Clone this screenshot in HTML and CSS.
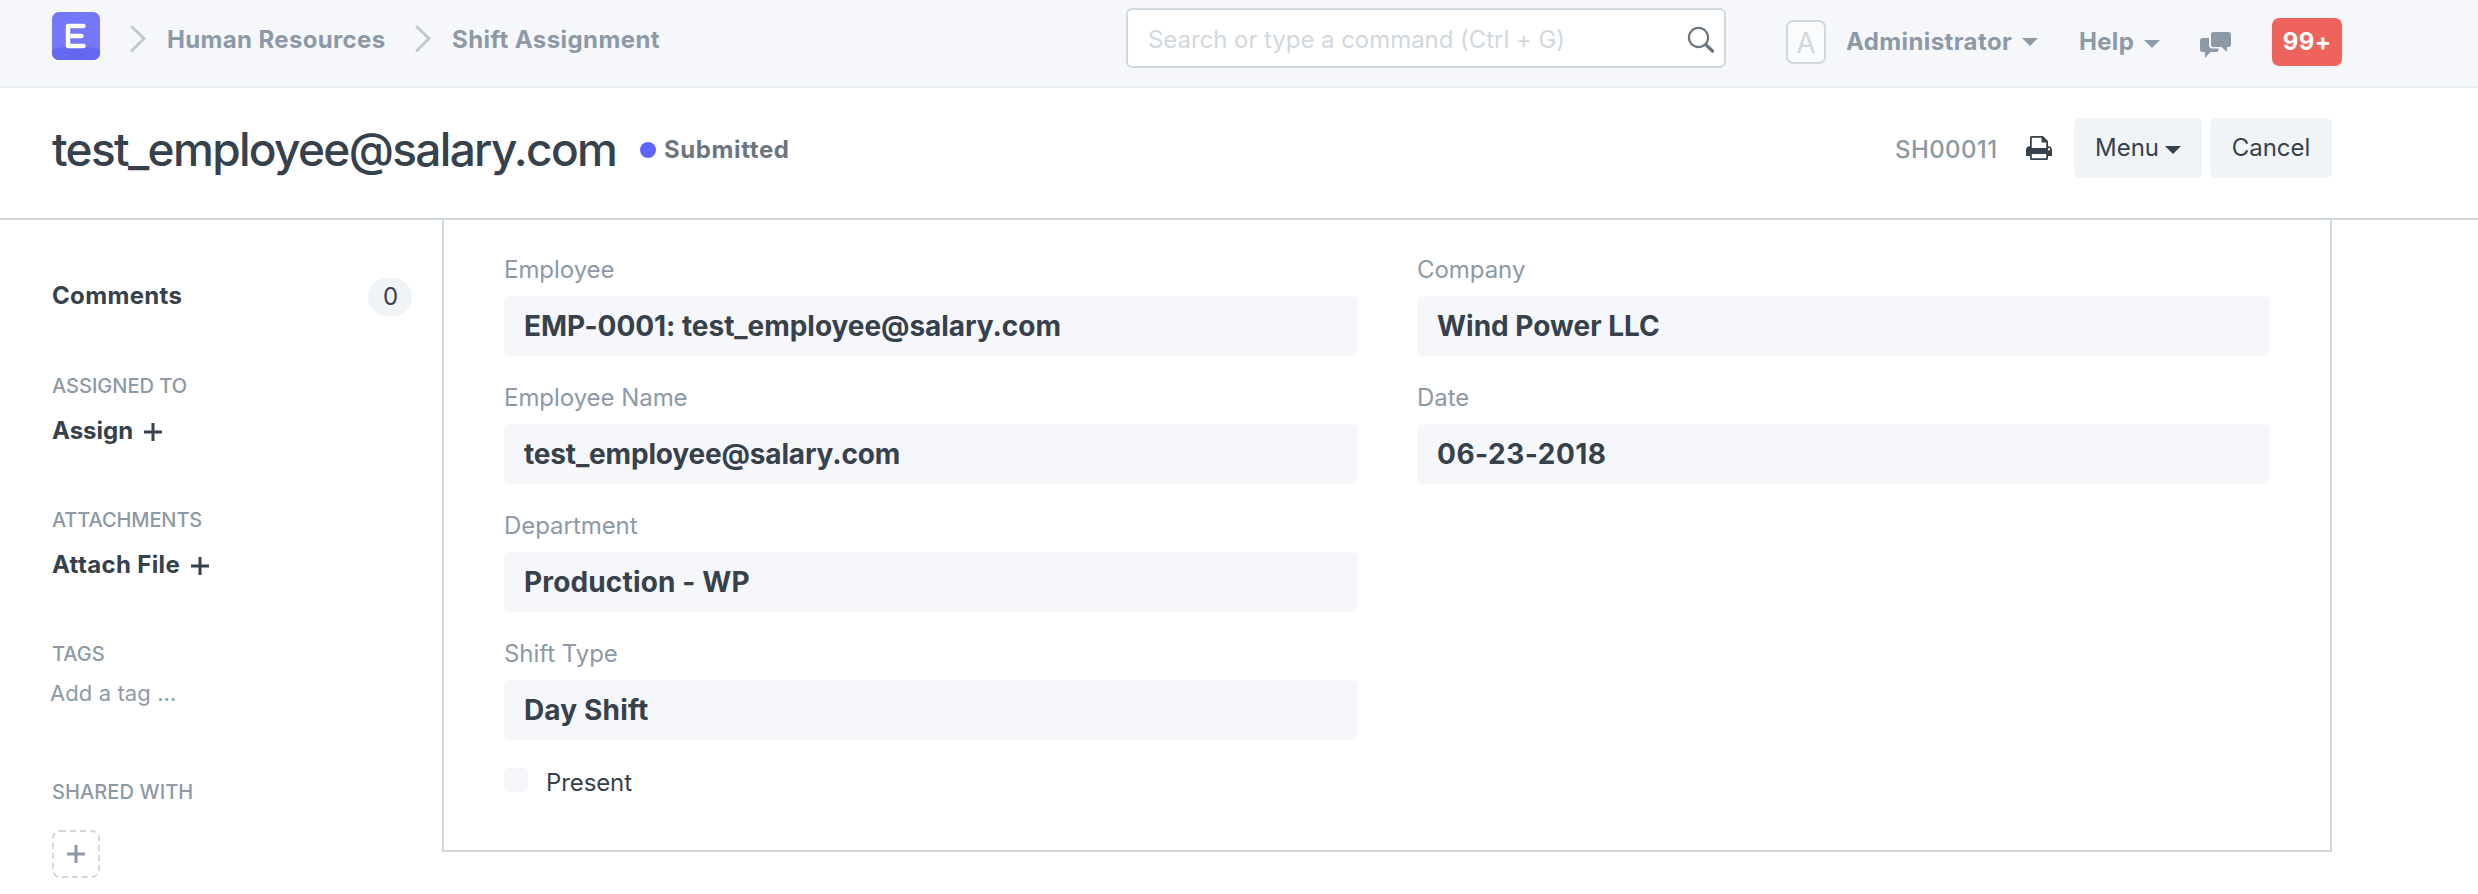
FILE: index.html
```html
<!DOCTYPE html>
<html lang="en">
<head>
<meta charset="utf-8">
<title>Shift Assignment</title>
<link rel="stylesheet" href="styles.css">
</head>
<body>
<header class="navbar">
  <nav class="crumbs">
    <svg class="logo" viewBox="0 0 48 48"><defs><clipPath id="lc"><rect width="48" height="48" rx="7"/></clipPath></defs><g clip-path="url(#lc)"><rect width="48" height="48" fill="#7677f8"/><path d="M0 38Q24 30 48 38V48H0Z" fill="#6467ef"/></g><path d="M31.500 14H16V34H31.500M16 24H29.500" fill="none" stroke="#fff" stroke-width="4.400" stroke-linecap="round" stroke-linejoin="round"/></svg>
    <svg class="chev chev-a" viewBox="0 0 16 28"><path d="M2 2L14 13.500L2 25.500" /></svg>
    <a class="crumb crumb-a"><span>Human Resources</span></a>
    <svg class="chev chev-b" viewBox="0 0 16 28"><path d="M2 2L14 13.500L2 25.500" /></svg>
    <a class="crumb crumb-b"><span>Shift Assignment</span></a>
  </nav>
  <div class="search"><span>Search or type a command (Ctrl + G)</span>
    <svg class="mag" viewBox="0 0 28 28"><circle cx="11.500" cy="11.500" r="9.600" fill="none" stroke="#6c7680" stroke-width="2.200"/><path d="M18.800 18.800L25.500 25" stroke="#6c7680" stroke-width="3.400" stroke-linecap="round"/></svg>
  </div>
  <div class="avatar">A</div>
  <a class="nav-link admin">Administrator</a><i class="caret caret-admin"></i>
  <a class="nav-link help">Help</a><i class="caret caret-help"></i>
  <svg class="chat" viewBox="0 0 32 27"><path d="M13.500 0H28.500Q31 0 31 2.500V12.500Q31 15 28.500 15H27V20L21.500 15H13.500Q11 15 11 12.500V2.500Q11 0 13.500 0Z"/><path d="M2.500 6H9V13Q9 16.500 12.500 16.500H18.500V17.500Q18.500 20 16 20H10.500L5 26V20H2.500Q0 20 0 17.500V8.500Q0 6 2.500 6Z"/></svg>
  <div class="badge">99+</div>
</header>
<section class="page-head">
  <h1>test_employee@salary.com</h1>
  <i class="dot"></i><span class="status">Submitted</span>
  <div class="actions">
    <span class="doc-id">SH00011</span>
    <svg class="printer" viewBox="0 0 26 24"><path fill="#36414c" fill-rule="evenodd" d="M4 10V1.500Q4 0 5.500 0H17L22 5V10Q26 10.500 26 14V20H22V22.500Q22 24 20.500 24H5.500Q4 24 4 22.500V20H0V14Q0 10.500 4 10ZM5.800 1.800V12H20.200V6.500H15.500V1.800ZM5.800 18V22.200H20.200V18ZM23 12A1.200 1.200 0 1 0 23 14.400A1.200 1.200 0 1 0 23 12Z"/></svg>
    <button class="btn menu">Menu<i class="caret caret-dark"></i></button>
    <button class="btn cancel">Cancel</button>
  </div>
</section>
<main class="body">
  <aside class="side">
    <div class="row comments"><b>Comments</b><span class="count">0</span></div>
    <h6 class="assigned">Assigned To</h6>
    <div class="row assign"><b>Assign</b><svg class="plus" viewBox="0 0 18 18"><path d="M9 0V18M0 9H18"/></svg></div>
    <h6 class="attachments">Attachments</h6>
    <div class="row attach"><b>Attach File</b><svg class="plus" viewBox="0 0 18 18"><path d="M9 0V18M0 9H18"/></svg></div>
    <h6 class="tags">Tags</h6>
    <div class="row add-tag"><span>Add a tag ...</span></div>
    <h6 class="shared">Shared With</h6>
    <div class="share-add"><svg viewBox="0 0 48 48"><rect x="1" y="1" width="46" height="46" rx="7"/><path d="M24 15V33M15 24H33"/></svg></div>
  </aside>
  <div class="form">
    <div class="col">
      <div class="field"><label>Employee</label><div class="value code">EMP-0001: test_employee@salary.com</div></div>
      <div class="field"><label>Employee Name</label><div class="value email">test_employee@salary.com</div></div>
      <div class="field"><label>Department</label><div class="value">Production - WP</div></div>
      <div class="field"><label>Shift Type</label><div class="value">Day Shift</div></div>
      <div class="check"><i></i><span>Present</span></div>
    </div>
    <div class="col">
      <div class="field"><label>Company</label><div class="value company">Wind Power LLC</div></div>
      <div class="field"><label>Date</label><div class="value date">06-23-2018</div></div>
    </div>
  </div>
</main>
</body>
</html>
```

FILE: styles.css
```css
* { box-sizing: border-box; }
body { margin: 0; background: #fff; color: #36414c; font-family: Inter, sans-serif; font-size: 24px; width: 2478px; height: 894px; overflow: hidden; }
svg { display: block; flex: none; }
.navbar { height: 88px; background: #f5f7fa; border-bottom: 2px solid #ebeff2; display: flex; align-items: flex-start; padding-left: 52px; color: #8d99a6; white-space: nowrap; font-weight: 700; line-height: 30px; }
.crumbs { display: flex; width: 1074px; }
.logo { width: 48px; height: 48px; margin-top: 12px; }
.chev { width: 16px; height: 28px; margin-top: 25px; fill: none; stroke: #c0c8d0; stroke-width: 3; stroke-linecap: round; }
.chev-a { margin-left: 30px; }
.chev-b { margin-left: 0; }
.crumb { margin-top: 25px; letter-spacing: 0.35px; }
.crumb-a { margin-left: 21px; width: 248px; }
.crumb-b { margin-left: 21px; letter-spacing: 0.42px; }
.search { width: 600px; height: 60px; margin-top: 8px; border: 2px solid #d1d8dd; border-radius: 6px; background: #fff; color: #d1d8dd; display: flex; justify-content: space-between; padding: 15px 9px 0 20px; font-weight: 400; letter-spacing: -0.05px; }
.mag { width: 28px; height: 28px; margin-top: 1px; }
.avatar { width: 40px; height: 44px; margin: 20px 0 0 60px; border: 2px solid #d1d8dd; border-radius: 7px; background: #fafbfc; color: #d1d8dd; font-weight: 400; font-size: 28px; text-align: center; line-height: 42px; }
.nav-link { margin-top: 27px; }
.admin { margin-left: 20px; width: 166px; letter-spacing: 0.4px; }
.help { margin-left: 41px; width: 55px; letter-spacing: 0.3px; }
.caret { border: 8px solid transparent; border-top-color: currentColor; border-bottom: 0; flex: none; }
.caret-admin { margin: 38px 0 0 10px; }
.caret-help { margin: 40px 0 0 10px; }
.chat { width: 32px; height: 27px; margin: 32px 0 0 40px; fill: #8d99a6; }
.badge { width: 70px; height: 48px; margin: 18px 0 0 40px; background: #ee635c; border-radius: 7px; color: #fff; letter-spacing: 0.4px; line-height: 48px; text-align: center; }
.page-head { height: 132px; border-bottom: 2px solid #d1d8dd; padding: 0 146px 0 52px; display: flex; white-space: nowrap; }
h1 { margin: 35px 0 0; width: 564px; font-size: 46px; font-weight: 500; line-height: 52px; letter-spacing: -1.67px; }
.dot { width: 16px; height: 16px; margin: 54px 8px 0 24px; border-radius: 50%; background: #5e64ff; }
.status { margin-top: 47px; line-height: 30px; font-weight: 700; letter-spacing: 0.6px; color: #6c7680; }
.actions { display: flex; margin-left: auto; }
.doc-id { margin-top: 47px; width: 103px; line-height: 30px; font-weight: 500; letter-spacing: 0.4px; color: #8d99a6; }
.printer { width: 26px; height: 24px; margin: 48px 22px 0 28px; }
.btn { height: 60px; margin: 30px 0 0; padding: 0; border: 0; border-radius: 6px; background: #f0f4f7; font: 400 24px/60px Inter, sans-serif; color: #36414c; display: flex; justify-content: center; }
.menu { width: 128px; margin-right: 8px; }
.cancel { width: 122px; }
.caret-dark { margin: 28px 0 0 6px; }
.body { display: flex; }
.side { width: 442px; padding: 58px 30px 0 52px; line-height: 30px; }
.row { display: flex; height: 38px; white-space: nowrap; }
.row b { font-weight: 700; letter-spacing: 0.35px; }
.comments { justify-content: space-between; padding-top: 3px; }
.count { width: 44px; height: 38px; margin-top: -3px; border-radius: 19px; background: #f0f4f7; text-align: center; line-height: 37px; padding-left: 1px; }
h6 { margin: 0; font-size: 20px; font-weight: 500; line-height: 24px; text-transform: uppercase; color: #8d99a6; }
.assigned { margin-top: 58px; }
.assign, .attach { margin-top: 18px; }
.assign b { letter-spacing: 0; }
.plus { width: 18px; height: 18px; margin: 7px 0 0 11px; stroke: #36414c; stroke-width: 3; }
.attachments, .tags { margin-top: 54px; }
.attachments { letter-spacing: -0.1px; }
.add-tag { margin-top: 12px; margin-left: -2px; font-size: 22px; letter-spacing: 0.1px; color: #8d99a6; }
.shared { margin-top: 64px; letter-spacing: 0.1px; }
.share-add { margin-top: 26px; width: 48px; height: 48px; }
.share-add svg { fill: none; stroke: #d1d8dd; stroke-width: 2; }
.share-add rect { stroke-dasharray: 6 4; }
.share-add path { stroke: #8d99a6; stroke-width: 3; }
.form { width: 1890px; height: 632px; border: 2px solid #d1d8dd; border-top: 0; padding: 35px 0 0 60px; display: flex; gap: 59px; }
.col { width: 854px; flex: none; }
.col + .col { width: 853px; }
.field { height: 128px; }
label { display: block; height: 41px; line-height: 30px; letter-spacing: -0.05px; color: #8d99a6; }
.value { height: 60px; padding-left: 20px; border-radius: 6px; background: #f5f7fa; font-size: 28px; font-weight: 700; letter-spacing: 0.15px; line-height: 61px; white-space: nowrap; }
.code { letter-spacing: -0.05px; }
.email { letter-spacing: -0.17px; }
.company { letter-spacing: 0; }
.date { letter-spacing: 0.5px; }
.check { display: flex; }
.check i { width: 24px; height: 24px; margin-top: 1px; border-radius: 5px; background: #f5f7fa; }
.check span { margin: 1px 0 0 18px; line-height: 30px; letter-spacing: -0.1px; }
```
